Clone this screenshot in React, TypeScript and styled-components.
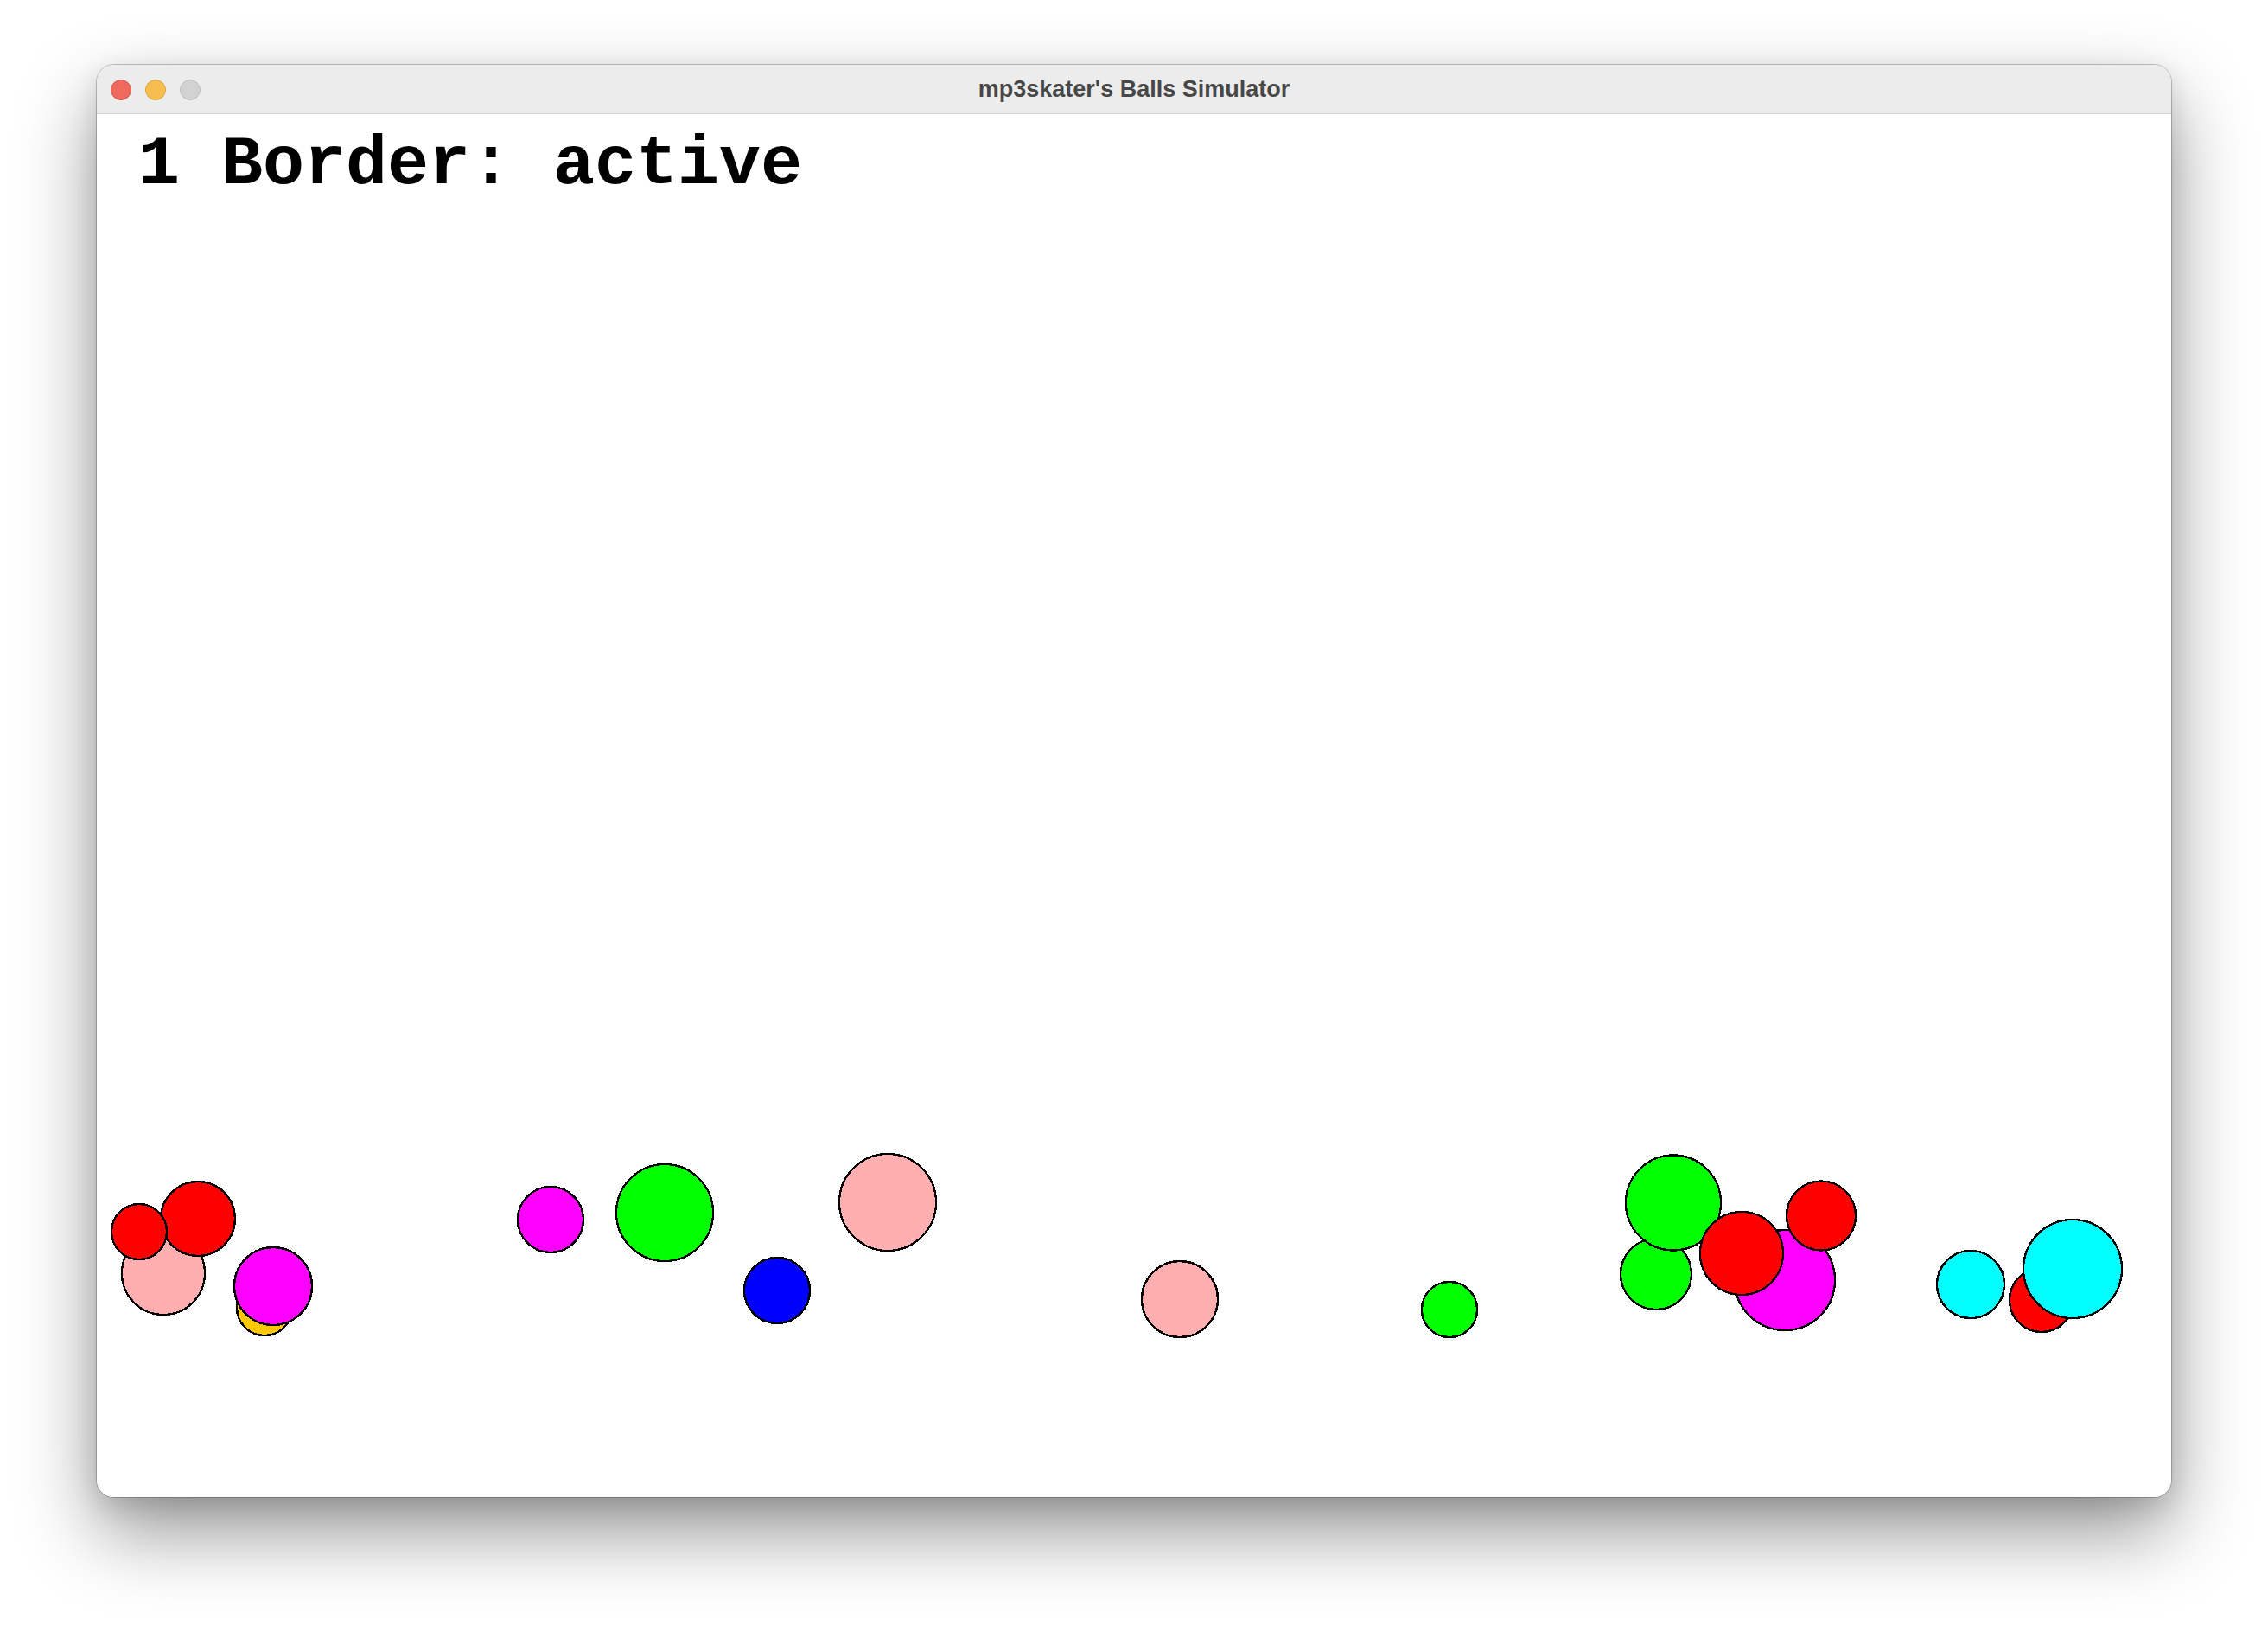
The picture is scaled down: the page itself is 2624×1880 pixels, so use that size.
import styled, { createGlobalStyle } from 'styled-components';

const GlobalStyle = createGlobalStyle`
  html, body {
    margin: 0;
    padding: 0;
    background: #ffffff;
  }
`;

const Page = styled.div`
  width: 2624px;
  height: 1880px;
  box-sizing: border-box;
  padding: 75px 112px;
  background: #ffffff;
  overflow: hidden;
`;

const Window = styled.div`
  width: 2400px;
  height: 1657px;
  display: flex;
  flex-direction: column;
  border-radius: 20px;
  overflow: hidden;
  background: #ffffff;
  box-shadow: 0 0 0 1px rgba(0, 0, 0, 0.22), 0 40px 90px rgba(0, 0, 0, 0.42),
    0 10px 30px rgba(0, 0, 0, 0.12);
`;

const TitleBar = styled.div`
  height: 56px;
  flex-shrink: 0;
  display: grid;
  grid-template-columns: 1fr auto 1fr;
  align-items: center;
  background: #ececec;
  border-bottom: 1px solid #d5d5d5;
`;

const Lights = styled.div`
  display: flex;
  gap: 16px;
  padding-left: 16px;
  padding-top: 2px;
`;

const Light = styled.span<{ $fill: string; $edge: string }>`
  width: 24px;
  height: 24px;
  box-sizing: border-box;
  border-radius: 50%;
  background: ${(p) => p.$fill};
  border: 1px solid ${(p) => p.$edge};
`;

const Title = styled.div`
  font-family: 'Liberation Sans', Arial, sans-serif;
  font-weight: bold;
  font-size: 27px;
  color: #474747;
  padding-top: 1px;
`;

const Content = styled.div`
  flex: 1;
  display: grid;
  background: #ffffff;

  & > * {
    grid-area: 1 / 1;
  }
`;

const Status = styled.div`
  margin: 19px 0 0 48px;
  font-family: 'Liberation Mono', 'Courier New', monospace;
  font-weight: bold;
  font-size: 80px;
  line-height: 80px;
  color: #000000;
  white-space: pre;
  align-self: start;
  justify-self: start;
`;

const Canvas = styled.svg`
  display: block;
  width: 2400px;
  height: 1600px;
`;

type Ball = { x: number; y: number; r: number; color: string };

const PINK = '#ffafaf';
const RED = '#ff0000';
const GREEN = '#00ff00';
const BLUE = '#0000ff';
const MAGENTA = '#ff00ff';
const CYAN = '#00ffff';
const ORANGE = '#ffc800';

// outer radius, content coordinates
const balls: Ball[] = [
  { x: 77, y: 1341, r: 49, color: PINK },
  { x: 117, y: 1278, r: 44, color: RED },
  { x: 49, y: 1293, r: 33, color: RED },
  { x: 194, y: 1381, r: 33, color: ORANGE },
  { x: 204, y: 1356, r: 46, color: MAGENTA },
  { x: 525, y: 1279, r: 39, color: MAGENTA },
  { x: 657, y: 1271, r: 57, color: GREEN },
  { x: 787, y: 1361, r: 39, color: BLUE },
  { x: 915, y: 1259, r: 57, color: PINK },
  { x: 1253, y: 1371, r: 45, color: PINK },
  { x: 1565, y: 1383, r: 33, color: GREEN },
  { x: 1804, y: 1342, r: 42, color: GREEN },
  { x: 1824, y: 1259.5, r: 56, color: GREEN },
  { x: 1953, y: 1349, r: 59, color: MAGENTA },
  { x: 1903, y: 1318, r: 49, color: RED },
  { x: 1995, y: 1274.5, r: 41, color: RED },
  { x: 2168, y: 1354, r: 40, color: CYAN },
  { x: 2250, y: 1372, r: 38, color: RED },
  { x: 2286, y: 1336, r: 58, color: CYAN },
];

const App = () => {
  return (
    <>
      <GlobalStyle />
      <Page>
        <Window>
          <TitleBar>
            <Lights>
              <Light $fill="#ee6a5f" $edge="#d0574c" />
              <Light $fill="#f5be4f" $edge="#d9a23e" />
              <Light $fill="#d3d2d3" $edge="#bdbcbd" />
            </Lights>
            <Title>mp3skater's Balls Simulator</Title>
            <div />
          </TitleBar>
          <Content>
            <Canvas viewBox="0 0 2400 1600" shapeRendering="crispEdges">
              {balls.map((b, i) => (
                <circle
                  key={i}
                  cx={b.x}
                  cy={b.y}
                  r={b.r - 1}
                  fill={b.color}
                  stroke="#000000"
                  strokeWidth={2.4}
                />
              ))}
            </Canvas>
            <Status>1 Border: active</Status>
          </Content>
        </Window>
      </Page>
    </>
  );
};

export default App;
